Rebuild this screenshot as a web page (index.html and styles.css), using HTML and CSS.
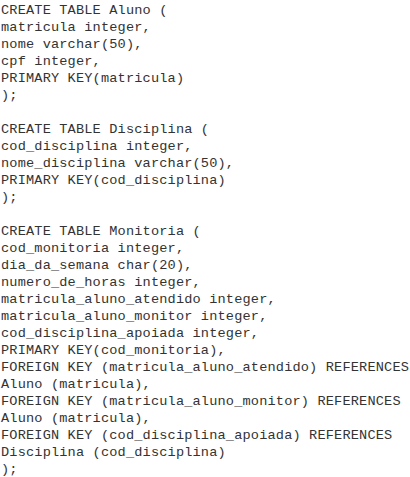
FILE: index.html
```html
<!DOCTYPE html>
<html>
<head>
<meta charset="utf-8">
<link rel="stylesheet" href="styles.css">
</head>
<body>
<pre class="sql">CREATE TABLE Aluno (
matricula integer,
nome varchar(50),
cpf integer,
PRIMARY KEY(matricula)
);

CREATE TABLE Disciplina (
cod_disciplina integer,
nome_disciplina varchar(50),
PRIMARY KEY(cod_disciplina)
);

CREATE TABLE Monitoria (
cod_monitoria integer,
dia_da_semana char(20),
numero_de_horas integer,
matricula_aluno_atendido integer,
matricula_aluno_monitor integer,
cod_disciplina_apoiada integer,
PRIMARY KEY(cod_monitoria),
FOREIGN KEY (matricula_aluno_atendido) REFERENCES
Aluno (matricula),
FOREIGN KEY (matricula_aluno_monitor) REFERENCES
Aluno (matricula),
FOREIGN KEY (cod_disciplina_apoiada) REFERENCES
Disciplina (cod_disciplina)
);</pre>
</body>
</html>
```
FILE: styles.css
```css
html, body {
  margin: 0;
  padding: 0;
  background: #ffffff;
}
.sql {
  margin: 0;
  padding: 2px 0 0 1px;
  font-family: "Courier New", "Nimbus Mono PS", "FreeMono", "Liberation Mono", monospace;
  font-size: 13.6px;
  letter-spacing: 0.17px;
  line-height: 17px;
  color: #333333;
  white-space: pre;
}
```
